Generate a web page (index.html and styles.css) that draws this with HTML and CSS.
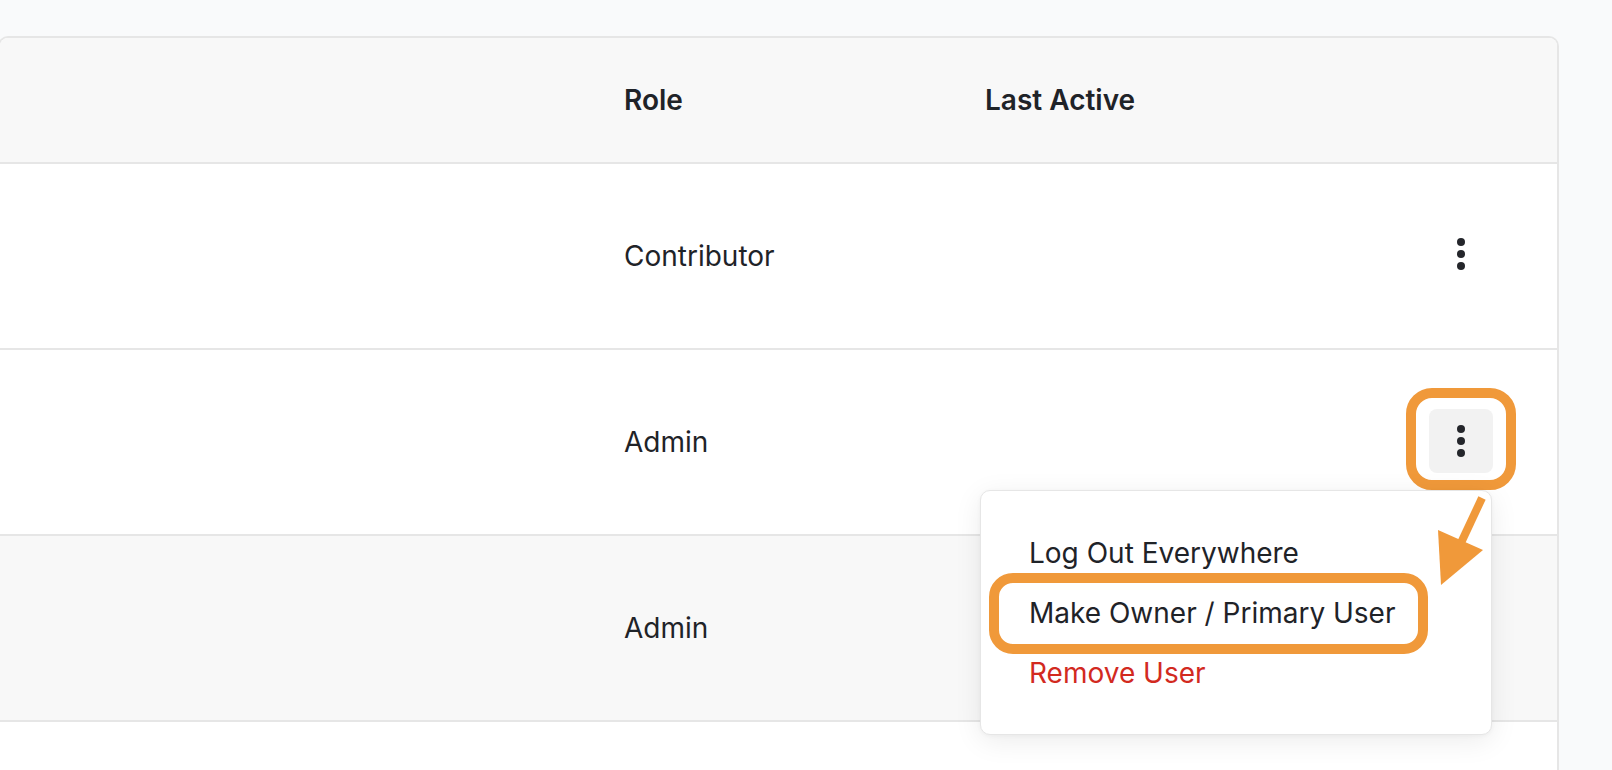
FILE: index.html
```html
<!DOCTYPE html>
<html lang="en">
<head>
<meta charset="utf-8">
<title>Users</title>
<link rel="stylesheet" href="styles.css">
</head>
<body>
<div class="page">
  <div class="card">
    <div class="row head">
      <div class="cell"></div>
      <div class="cell">Role</div>
      <div class="cell">Last Active</div>
      <div class="cell act"></div>
    </div>
    <div class="row">
      <div class="cell"></div>
      <div class="cell">Contributor</div>
      <div class="cell"></div>
      <div class="cell act">
        <div class="kebab-wrap">
          <button class="kebab" type="button" aria-label="More"><span></span><span></span><span></span></button>
        </div>
      </div>
    </div>
    <div class="row">
      <div class="cell"></div>
      <div class="cell">Admin</div>
      <div class="cell"></div>
      <div class="cell act">
        <div class="kebab-wrap">
          <button class="kebab active" type="button" aria-label="More"><span></span><span></span><span></span></button>
          <div class="ring"></div>
          <div class="menu">
            <div class="item">Log Out Everywhere</div>
            <div class="item">Make Owner / Primary User</div>
            <div class="item danger">Remove User</div>
            <div class="item-ring"></div>
          </div>
          <svg class="arrow" width="64" height="100" viewBox="0 0 64 100">
            <line x1="52" y1="9" x2="30" y2="56" stroke="#f0993a" stroke-width="8"/>
            <polygon points="8,41 53,61 11,96" fill="#f0993a"/>
          </svg>
        </div>
      </div>
    </div>
    <div class="row alt">
      <div class="cell"></div>
      <div class="cell">Admin</div>
      <div class="cell"></div>
      <div class="cell act"></div>
    </div>
    <div class="row last">
      <div class="cell"></div>
      <div class="cell"></div>
      <div class="cell"></div>
      <div class="cell act"></div>
    </div>
  </div>
</div>
</body>
</html>
```
FILE: styles.css
```css
* { box-sizing: border-box; }
html, body {
  margin: 0;
  height: 100%;
  overflow: hidden;
  background: #f9fafb;
  font-family: Inter, "Liberation Sans", sans-serif;
  color: #1f2328;
}
.page {
  padding: 36px 53px 0 0;
}
.card {
  margin-left: -2px;
  border: 2px solid #e6e6e6;
  border-bottom: none;
  border-radius: 10px 10px 0 0;
  background: #ffffff;
}
.row {
  display: grid;
  grid-template-columns: 600px 361px 1fr 160px;
  height: 186px;
  border-bottom: 2px solid #e6e6e6;
  font-size: 28px;
  line-height: 34px;
}
.row.head {
  height: 126px;
  background: #f8f8f8;
  font-weight: 600;
  border-radius: 8px 8px 0 0;
}
.row.alt { background: #f8f8f8; }
.row.last {
  height: 48px;
  border-bottom: none;
}
.cell {
  display: flex;
  align-items: center;
  padding-left: 24px;
}
.cell.act {
  justify-content: flex-end;
  padding-left: 0;
  padding-right: 64px;
}
.kebab-wrap {
  position: relative;
  width: 64px;
  height: 64px;
  margin-top: -4px;
}
.row:nth-child(3) .kebab-wrap { margin-top: -2px; }
.kebab {
  width: 64px;
  height: 64px;
  border: none;
  border-radius: 8px;
  background: transparent;
  padding: 0;
  display: flex;
  flex-direction: column;
  align-items: center;
  justify-content: center;
  gap: 4px;
}
.kebab span {
  display: block;
  width: 8px;
  height: 8px;
  border-radius: 50%;
  background: #24262b;
}
.kebab.active { background: #f2f2f2; }
.ring {
  position: absolute;
  left: -23px;
  top: -21px;
  width: 110px;
  height: 102px;
  border: 10px solid #f0993a;
  border-radius: 26px;
  pointer-events: none;
}
.menu {
  position: absolute;
  top: 81px;
  right: 1px;
  width: 512px;
  height: 245px;
  background: #ffffff;
  border: 1px solid #e6e6e6;
  border-radius: 10px;
  box-shadow: 0 6px 28px rgba(0, 0, 0, 0.08), 0 1px 4px rgba(0, 0, 0, 0.04);
  padding: 32px 0 31px 48px;
  z-index: 5;
}
.item {
  font-size: 28px;
  line-height: 60px;
  white-space: nowrap;
}
.item.danger { color: #d22a1f; }
.item-ring {
  position: absolute;
  left: 8px;
  top: 82px;
  width: 439px;
  height: 81px;
  border: 10px solid #f0993a;
  border-radius: 24px;
}
.arrow {
  position: absolute;
  left: 1px;
  top: 80px;
  z-index: 6;
}
```
